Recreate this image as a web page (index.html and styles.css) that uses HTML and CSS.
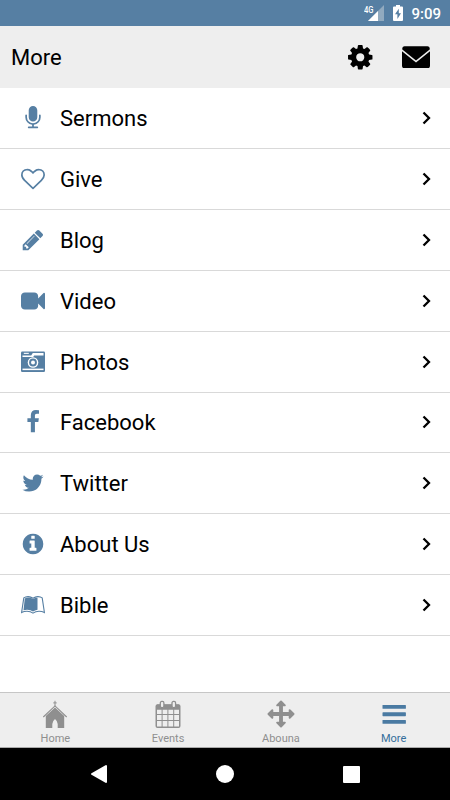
FILE: index.html
```html
<!DOCTYPE html>
<html lang="en">
<head>
  <meta charset="UTF-8">
  <meta name="viewport" content="width=device-width, initial-scale=1.0">
  <title>More</title>
  <link rel="stylesheet" href="styles.css">
</head>
<body>
  <!-- Status Bar -->
  <div class="status-bar">
    <svg class="signal" width="21" height="18" viewBox="0 0 21 18">
      <path d="M20 1v16H4z" fill="#91aabf"/>
      <path d="M14 7v10H4z" fill="#fff"/>
      <text x="0" y="8.5" class="network" textLength="9.5" lengthAdjust="spacingAndGlyphs">4G</text>
    </svg>
    <svg class="battery" width="10" height="16" viewBox="0 0 10 16">
      <path d="M3 0h4v1.600h2q1 0 1 1V15q0 1-1 1H1q-1 0-1-1V2.600q0-1 1-1h2z" fill="#fff"/>
      <path d="M5.800 3.800L2 9.300h2.400V14L8 8.300H5.800z" fill="#567fa3"/>
    </svg>
    <span class="time">9:09</span>
  </div>

  <!-- Header -->
  <header class="header">
    <h1>More</h1>
    <svg class="gear" viewBox="0 0 1792 1792"><path d="M1152 896q0-106-75-181t-181-75-181 75-75 181 75 181 181 75 181-75 75-181zm512-109v222q0 12-8 23t-20 13l-185 28q-19 54-39 91 35 50 107 138 10 12 10 25t-9 23q-27 37-99 108t-94 71q-12 0-26-9l-138-108q-44 23-91 38-16 136-29 186-7 28-36 28h-222q-14 0-24.500-8.500t-11.500-21.500l-28-184q-49-16-90-37l-141 107q-10 9-25 9-14 0-25-11-126-114-165-168-7-10-7-23 0-12 8-23 15-21 51-66.500t54-70.500q-27-50-41-99l-183-27q-13-2-21-12.500t-8-23.500v-222q0-12 8-23t19-13l186-28q14-46 39-92-40-57-107-138-10-12-10-24 0-10 9-23 26-36 98.500-107.500t94.500-71.500q13 0 26 10l138 107q44-23 91-38 16-136 29-186 7-28 36-28h222q14 0 24.500 8.500t11.500 21.500l28 184q49 16 90 37l142-107q9-9 24-9 13 0 25 10 129 119 165 170 7 8 7 22 0 12-8 23-15 21-51 66.500t-54 70.500q26 50 41 98l183 28q13 2 21 12.500t8 23.500z"/></svg>
    <svg class="mail" viewBox="0 0 28 22">
      <path d="M.3 1.800Q.6 0 2.500 0h23q1.900 0 2.200 1.800v1.400L14 14.200.3 3.200z"/>
      <path d="M0 5l14 11.300L28 5v14.500q0 2.500-2.500 2.500h-23Q0 22 0 19.500z"/>
    </svg>
  </header>

  <!-- Menu -->
  <main class="menu">
    <div class="row">
      <svg class="icon" viewBox="0 0 1792 1792"><path d="M1472 704v128q0 221-147.500 384.500t-364.500 187.500v132h256q26 0 45 19t19 45-19 45-45 19h-640q-26 0-45-19t-19-45 19-45 45-19h256v-132q-217-24-364.500-187.500t-147.500-384.500v-128q0-26 19-45t45-19 45 19 19 45v128q0 185 131.500 316.500t316.500 131.500 316.500-131.500 131.500-316.500v-128q0-26 19-45t45-19 45 19 19 45zm-256-384v512q0 132-94 226t-226 94-226-94-94-226v-512q0-132 94-226t226-94 226 94 94 226z"/></svg>
      <span class="label">Sermons</span>
      <svg class="chevron" viewBox="0 0 10 14"><path d="M1.500 1.500L7 7l-5.500 5.500"/></svg>
    </div>
    <div class="row">
      <svg class="icon" viewBox="0 0 1792 1792"><path d="M1664 596q0-81-21.500-143t-55-98.500-81.500-59.500-94-31-98-8-112 25.500-110.500 64-86.500 72-60 61.500q-18 22-49 22t-49-22q-24-28-60-61.500t-86.500-72-110.500-64-112-25.500-98 8-94 31-81.500 59.500-55 98.500-21.500 143q0 168 187 355l581 560 580-559q188-188 188-356zm128 0q0 221-229 450l-623 600q-18 18-44 18t-44-18l-624-602q-10-8-27.500-26t-55.500-65.500-68-97.500-53.500-121-23.500-138q0-220 127-344t351-124q62 0 126.500 21.500t120 58 95.500 68.500 76 68q36-36 76-68t95.500-68.500 120-58 126.500-21.500q224 0 351 124t127 344z"/></svg>
      <span class="label">Give</span>
      <svg class="chevron" viewBox="0 0 10 14"><path d="M1.500 1.500L7 7l-5.500 5.500"/></svg>
    </div>
    <div class="row">
      <svg class="icon" viewBox="0 0 1792 1792"><path d="M491 1536l91-91-235-235-91 91v107h128v128h107zm523-928q0-22-22-22-10 0-17 7l-542 542q-7 7-7 17 0 22 22 22 10 0 17-7l542-542q7-7 7-17zm-54-192l416 416-832 832h-416v-416zm683 96q0 53-37 90l-166 166-416-416 166-165q36-38 90-38 53 0 91 38l235 234q37 39 37 91z"/></svg>
      <span class="label">Blog</span>
      <svg class="chevron" viewBox="0 0 10 14"><path d="M1.500 1.500L7 7l-5.500 5.500"/></svg>
    </div>
    <div class="row">
      <svg class="icon" viewBox="0 0 1792 1792"><path d="M1792 352v1088q0 42-39 59-13 5-25 5-27 0-45-19l-403-403v166q0 119-84.500 203.500t-203.500 84.500h-704q-119 0-203.500-84.500t-84.500-203.500v-704q0-119 84.500-203.500t203.500-84.500h704q119 0 203.500 84.500t84.500 203.500v165l403-402q18-19 45-19 12 0 25 5 39 17 39 59z"/></svg>
      <span class="label">Video</span>
      <svg class="chevron" viewBox="0 0 10 14"><path d="M1.500 1.500L7 7l-5.500 5.500"/></svg>
    </div>
    <div class="row">
      <svg class="icon" viewBox="0 0 24 24">
        <rect x="0" y="1.500" width="24" height="20.500" rx="1.200"/>
        <path d="M1.500 5.400h8.700l1.600-2.300h10.700v2.300h-9.300l-1 1.500H1.500z" fill="#fff"/>
        <path d="M2.800 2.800h5v1.100h-5z" fill="#fff"/>
        <path d="M1.500 18.600h21v1.500h-21z" fill="#fff"/>
        <circle cx="12" cy="12.500" r="5.300" fill="#fff"/>
        <circle cx="12" cy="12.500" r="3.900"/>
        <circle cx="12" cy="12.500" r="2" fill="#fff"/>
      </svg>
      <span class="label">Photos</span>
      <svg class="chevron" viewBox="0 0 10 14"><path d="M1.500 1.500L7 7l-5.500 5.500"/></svg>
    </div>
    <div class="row">
      <svg class="icon" viewBox="0 0 1792 1792"><path d="M1343 12v264h-157q-86 0-116 36t-30 108v189h293l-39 296h-254v759h-306v-759h-255v-296h255v-218q0-186 104-288.500t277-102.500q147 0 228 12z"/></svg>
      <span class="label">Facebook</span>
      <svg class="chevron" viewBox="0 0 10 14"><path d="M1.500 1.500L7 7l-5.500 5.500"/></svg>
    </div>
    <div class="row">
      <svg class="icon" viewBox="0 0 1792 1792"><path d="M1684 408q-67 98-162 167 1 14 1 42 0 130-38 259.500t-115.500 248.500-184.500 210.500-258 146-323 54.500q-271 0-496-145 35 4 78 4 225 0 401-138-105-2-188-64.500t-114-159.500q33 5 61 5 43 0 85-11-112-23-185.500-111.500t-73.500-205.500v-4q68 38 146 41-66-44-105-115t-39-154q0-88 44-163 121 149 294.500 238.500t371.500 99.500q-8-38-8-74 0-134 94.500-228.500t228.500-94.500q140 0 236 102 109-21 205-78-37 115-142 178 93-10 186-50z"/></svg>
      <span class="label">Twitter</span>
      <svg class="chevron" viewBox="0 0 10 14"><path d="M1.500 1.500L7 7l-5.500 5.500"/></svg>
    </div>
    <div class="row">
      <svg class="icon" viewBox="0 0 1792 1792"><path d="M1152 1376v-160q0-14-9-23t-23-9h-96v-512q0-14-9-23t-23-9h-320q-14 0-23 9t-9 23v160q0 14 9 23t23 9h96v320h-96q-14 0-23 9t-9 23v160q0 14 9 23t23 9h448q14 0 23-9t9-23zm-128-896v-160q0-14-9-23t-23-9h-192q-14 0-23 9t-9 23v160q0 14 9 23t23 9h192q14 0 23-9t9-23zm640 416q0 209-103 385.500t-279.500 279.500-385.500 103-385.500-103-279.500-279.500-103-385.500 103-385.500 279.500-279.500 385.500-103 385.500 103 279.500 279.500 103 385.500z"/></svg>
      <span class="label">About Us</span>
      <svg class="chevron" viewBox="0 0 10 14"><path d="M1.500 1.500L7 7l-5.500 5.500"/></svg>
    </div>
    <div class="row">
      <svg class="icon" viewBox="0 0 24 24">
        <path class="book" d="M12 5.200Q9.500 3.500 7 3.600 4.500 3.700 2.800 4.900L.6 19.500Q3 18.200 6 18.200q3.500 0 6 1.900 2.500-1.900 6-1.900 3 0 5.400 1.300L21.200 4.900Q19.500 3.700 17 3.600q-2.500-.1-5 1.600z"/>
        <path d="M12 6Q9.500 4.600 7.300 4.600 5.300 4.600 3.800 5.400L2.500 17.200Q4.500 16.600 6.500 16.700q3 0 5.500 1.900 1.900-1.400 4.500-1.800V4.700Q13.900 4.800 12 6z"/>
      </svg>
      <span class="label">Bible</span>
      <svg class="chevron" viewBox="0 0 10 14"><path d="M1.500 1.500L7 7l-5.500 5.500"/></svg>
    </div>
  </main>

  <!-- Tabs -->
  <nav class="tabs">
    <div class="tab">
      <svg viewBox="0 0 28 28">
        <path d="M14 .8v6M12.300 2.900h3.400" class="line"/>
        <path d="M2.300 17L14 5.900 25.700 17" class="roof"/>
        <path d="M14 7.400l9.200 8.700V28h-6.500v-4q0-2.600-2.700-4.900-2.700 2.300-2.700 4.900v4H4.800V16.100z"/>
      </svg>
      <span>Home</span>
    </div>
    <div class="tab">
      <svg viewBox="0 0 28 28">
        <path fill-rule="evenodd" d="M3.500 4.200h21q2 0 2 2V26q0 2-2 2h-21q-2 0-2-2V6.200q0-2 2-2zM3 9.700v4.300h4.600V9.700zm5.600 0v4.300h4.800V9.700zm5.800 0v4.300h4.800V9.700zm5.800 0v4.300H25V9.700zM3 15.100v4.900h4.600v-4.900zm5.600 0v4.900h4.800v-4.900zm5.800 0v4.900h4.800v-4.900zm5.800 0v4.900H25v-4.900zM3 21.100v5.400h4.600v-5.400zm5.600 0v5.400h4.800v-5.400zm5.800 0v5.400h4.800v-5.400zm5.800 0v5.400H25v-5.400z"/>
        <path d="M3 4.600h22v4H3z"/>
        <rect x="6.300" y="1.400" width="3.600" height="6.200" rx="1.500" class="ring"/>
        <rect x="18" y="1.400" width="3.600" height="6.200" rx="1.500" class="ring"/>
      </svg>
      <span>Events</span>
    </div>
    <div class="tab">
      <svg viewBox="-33 -33 1858 1858"><path d="M1792 896q0 26-19 45l-256 256q-19 19-45 19t-45-19-19-45v-128h-384v384h128q26 0 45 19t19 45-19 45l-256 256q-19 19-45 19t-45-19l-256-256q-19-19-19-45t19-45 45-19h128v-384h-384v128q0 26-19 45t-45 19-45-19l-256-256q-19-19-19-45t19-45l256-256q19-19 45-19t45 19 19 45v128h384v-384h-128q-26 0-45-19t-19-45 19-45l256-256q19-19 45-19t45 19l256 256q19 19 19 45t-19 45-45 19h-128v384h384v-128q0-26 19-45t45-19 45 19l256 256q19 19 19 45z"/></svg>
      <span>Abouna</span>
    </div>
    <div class="tab active">
      <svg viewBox="0 0 28 28">
        <rect x="2.500" y="4.900" width="23.400" height="3.900" rx=".6"/>
        <rect x="2.500" y="12.300" width="23.400" height="3.900" rx=".6"/>
        <rect x="2.500" y="19.900" width="23.400" height="3.900" rx=".6"/>
      </svg>
      <span>More</span>
    </div>
  </nav>

  <!-- System Buttons -->
  <div class="system-bar">
    <svg width="18" height="20" viewBox="0 0 18 20"><path d="M16 2v16L2 10z" fill="#fff" stroke="#fff" stroke-width="2" stroke-linejoin="round"/></svg>
    <div class="circle"></div>
    <div class="square"></div>
  </div>
</body>
</html>
```

FILE: styles.css
```css
body {
  margin: 0;
  height: 800px;
  display: flex;
  flex-direction: column;
  background-color: #fff;
  font-family: Roboto, sans-serif;
  color: #000;
  overflow: hidden;
}

svg {
  display: block;
  flex-shrink: 0;
}

.status-bar {
  height: 26px;
  background-color: #567fa3;
  display: flex;
  align-items: center;
  justify-content: flex-end;
  padding-right: 9px;
  box-sizing: border-box;
}

.network {
  font-size: 8.5px;
  font-weight: 500;
  fill: #fff;
}

.signal {
  margin-right: 8px;
}

.battery {
  margin-right: 8px;
}

.time {
  color: #fff;
  font-size: 15px;
  font-weight: 500;
  line-height: 26px;
  padding-top: 1px;
}

.header {
  height: 61.5px;
  background-color: #eee;
  display: flex;
  align-items: center;
  padding: 0 20px 0 11px;
  box-sizing: border-box;
}

h1 {
  flex: 1;
  margin: 0;
  font-size: 22px;
  font-weight: normal;
  line-height: 26px;
  padding-top: 2px;
}

.gear {
  width: 28.5px;
  height: 28.5px;
  margin-right: 28px;
}

.mail {
  width: 28px;
  height: 22.5px;
}

.menu {
  flex: 1;
  padding-top: 0.6px;
}

.row {
  height: 60.9px;
  display: flex;
  align-items: center;
  box-sizing: border-box;
  border-bottom: 1px solid #d9d9d9;
  padding: 0 18px 0 21px;
}

.icon {
  width: 24px;
  height: 24px;
  fill: #567fa3;
}

.book {
  fill: #fff;
  stroke: #567fa3;
  stroke-width: 1.1;
}

.label {
  flex: 1;
  margin-left: 15px;
  font-size: 22px;
  line-height: 26px;
  padding-top: 2px;
}

.chevron {
  width: 10px;
  height: 14px;
  fill: none;
  stroke: #000;
  stroke-width: 2.3;
}

.tabs {
  height: 56px;
  background-color: #eee;
  border-top: 1px solid #c6c6c6;
  border-bottom: 1px solid #aaa;
  box-sizing: border-box;
  display: flex;
  margin-left: -1px;
}

.tab {
  flex: 1;
  display: flex;
  flex-direction: column;
  align-items: center;
  padding-top: 7px;
  color: #8f8f8f;
  fill: #8f8f8f;
  font-size: 11px;
  line-height: 13px;
}

.tab svg {
  width: 28px;
  height: 28px;
  margin-bottom: 4px;
}

.active {
  color: #356e9b;
  fill: #4a7aa2;
}

.line {
  stroke: #8f8f8f;
  stroke-width: 1;
}

.roof {
  fill: none;
  stroke: #8f8f8f;
  stroke-width: 1.1;
}

.ring {
  fill: #eee;
  stroke: #8f8f8f;
  stroke-width: 1.3;
}

.system-bar {
  height: 52px;
  background-color: #000;
  display: flex;
  align-items: center;
  justify-content: space-between;
  padding: 0 90px 0 89.5px;
}

.circle {
  width: 18px;
  height: 18px;
  border-radius: 50%;
  background-color: #fff;
}

.square {
  width: 17px;
  height: 17px;
  border-radius: 1px;
  background-color: #fff;
}
```
